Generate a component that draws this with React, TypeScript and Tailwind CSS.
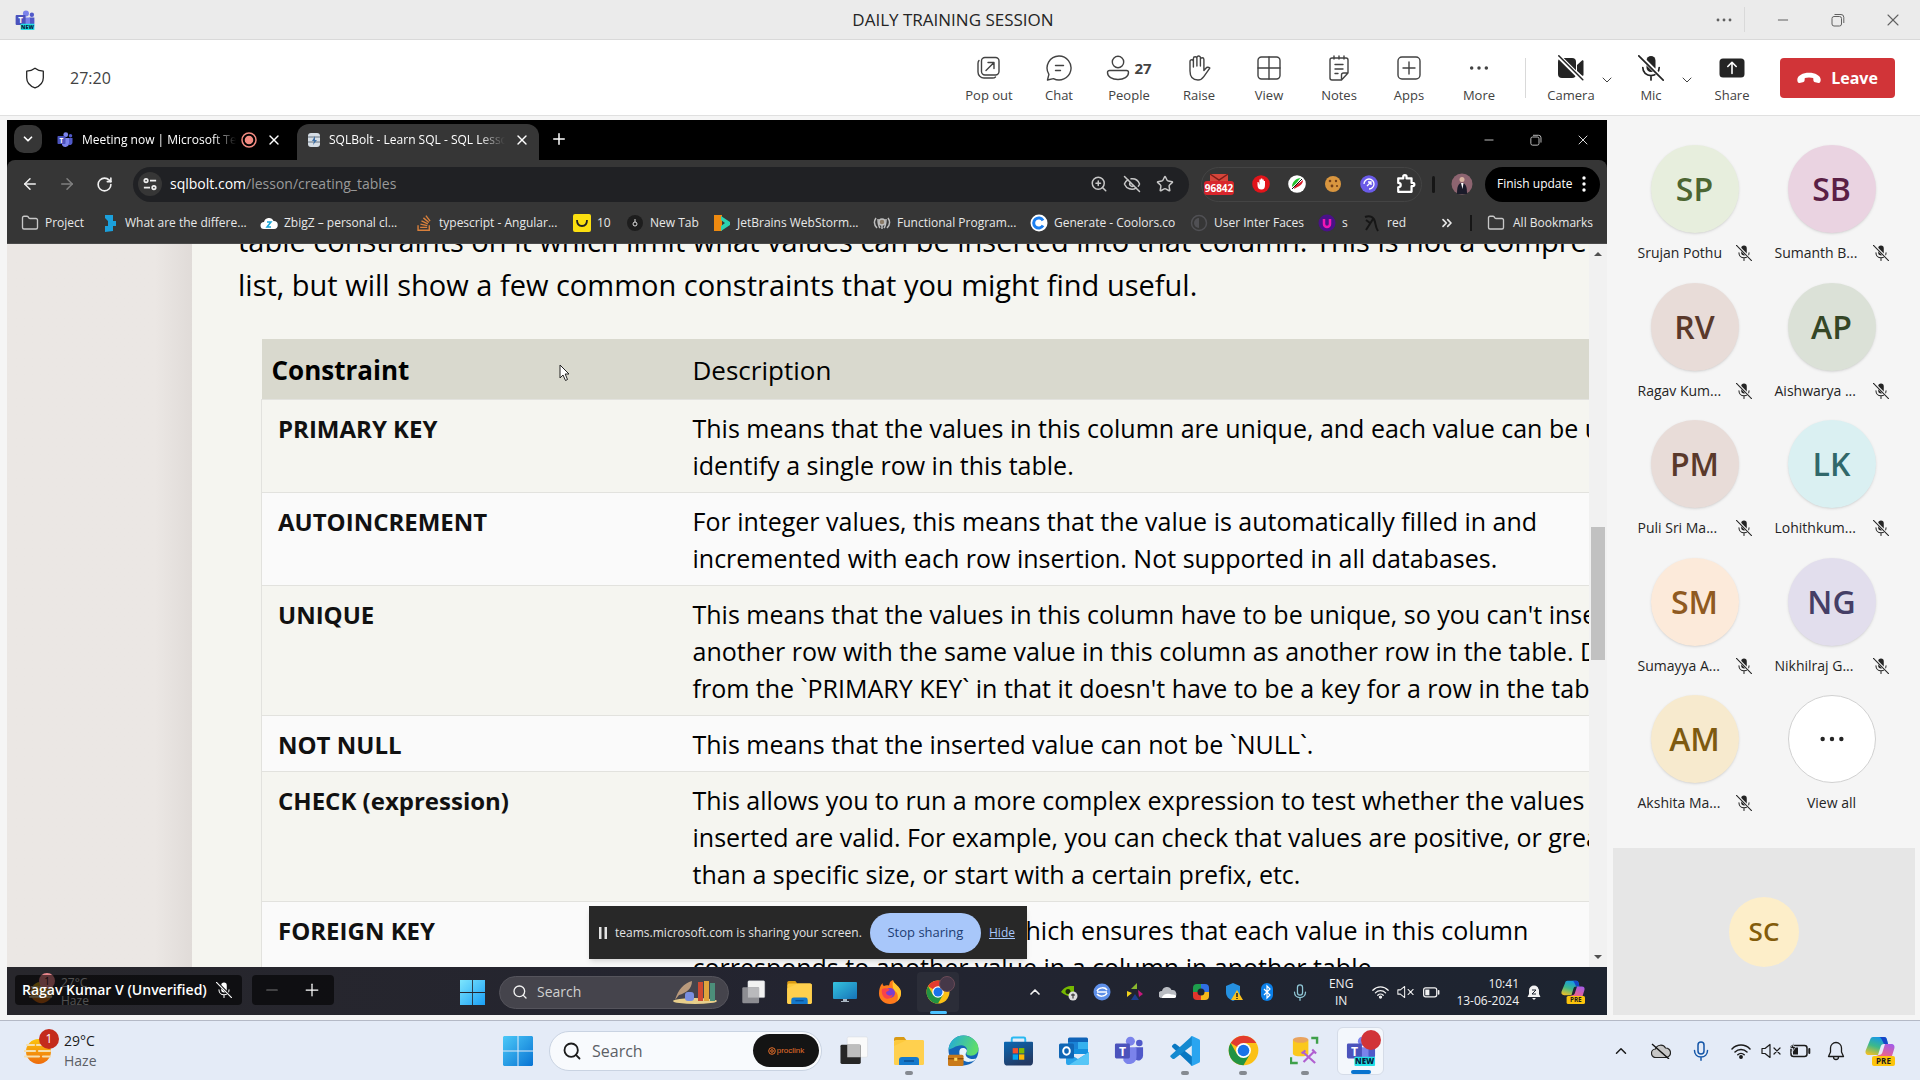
import React from "react";
import {
  ArrowLeft,
  ArrowRight,
  ChevronDown,
  ChevronUp,
  ChevronsRight,
  EyeOff,
  Folder,
  Minus,
  Plus,
  RotateCw,
  Search,
  Star,
  X,
  ZoomIn,
} from "lucide-react";
import { FaStackOverflow } from "react-icons/fa";

type IconProps = { className?: string };

/* ---------- line icons ---------- */

const Dots = ({ className = "" }: IconProps) => (
  <svg viewBox="0 0 24 24" className={className} fill="currentColor">
    <circle cx="4" cy="12" r="1.9" />
    <circle cx="12" cy="12" r="1.9" />
    <circle cx="20" cy="12" r="1.9" />
  </svg>
);

const Restore = ({ className = "" }: IconProps) => (
  <svg viewBox="0 0 14 14" className={className} fill="none" stroke="currentColor">
    <rect x="1" y="3.5" width="9.5" height="9.5" rx="2" />
    <path d="M3.5 1.5H10a2.8 2.8 0 0 1 2.8 2.8V10" />
  </svg>
);

const Shield = () => (
  <svg viewBox="0 0 20 22" className="h-[22px] w-5" fill="none" stroke="#242424" strokeWidth="1.3">
    <path d="M10 1.2C7.500 3.200 4.700 4 1.700 4.200v6.500c0 5 3.300 8.300 8.300 10.200 5-1.900 8.300-5.200 8.300-10.200V4.200C15.300 4 12.500 3.200 10 1.200z" strokeLinejoin="round" />
  </svg>
);

const line = {
  viewBox: "0 0 26 26",
  className: "h-[26px] w-[26px]",
  fill: "none",
  stroke: "currentColor",
  strokeWidth: 1.4,
  strokeLinecap: "round" as const,
  strokeLinejoin: "round" as const,
};

const PopOutIcon = () => (
  <svg {...line}>
    <rect x="5.500" y="2.500" width="17.500" height="17.500" rx="3.500" />
    <path d="M3 5.500c-.7.800-1 1.800-1 3V17a6 6 0 0 0 6 6h8.500c1.200 0 2.300-.4 3-1.100M10 15.500l8-8M12 7.500h6v6" />
  </svg>
);
const ChatIcon = () => (
  <svg {...line}>
    <path d="M13 1a12 12 0 1 1-5.600 22.600L1.500 25l1.400-5.700A12 12 0 0 1 13 1zM9.500 10.500h8M9.500 15.500h5" />
  </svg>
);
const PersonIcon = () => (
  <svg {...line} viewBox="0 0 24 26" className="h-[26px] w-6">
    <circle cx="12" cy="7" r="5.700" />
    <path d="M3.500 15.500h17a2 2 0 0 1 2 2c0 4.500-4.700 7-10.500 7s-10.500-2.500-10.500-7a2 2 0 0 1 2-2z" />
  </svg>
);
const HandIcon = () => (
  <svg {...line}>
    <path d="M4 14V6.500a1.700 1.700 0 0 1 3.400 0V12M7.400 11V3.500a1.700 1.700 0 0 1 3.500 0V11M10.900 11V2.700a1.700 1.700 0 0 1 3.500 0V11M14.400 11V4.500a1.700 1.700 0 0 1 3.500 0v11l2-2.300c1-1.200 2.600-1.300 3.600-.4l.3.300-6 8.600C16.400 23.800 14.600 25 12 25c-5.300 0-8-3.500-8-9v-3" />
  </svg>
);
const GridIcon = () => (
  <svg {...line}>
    <rect x="2" y="2" width="22" height="22" rx="3.500" />
    <path d="M13 2v22M2 13h22" />
  </svg>
);
const NotesIcon = () => (
  <svg {...line}>
    <path d="M6 3h14a2 2 0 0 1 2 2v13l-6.500 7H6a2 2 0 0 1-2-2V5a2 2 0 0 1 2-2zM22 18h-4.500a2 2 0 0 0-2 2v5M8 1v3M13 1v3M18 1v3M9 9.500h8M9 14h8M9 18.500h3" />
  </svg>
);
const AppsIcon = () => (
  <svg {...line}>
    <rect x="2" y="2" width="22" height="22" rx="4" />
    <path d="M13 7v12M7 13h12" />
  </svg>
);
const CameraOffIcon = () => (
  <svg viewBox="0 0 26 26" className="h-[26px] w-[26px]" fill="#242424">
    <rect x="0" y="3" width="18" height="20" rx="4" />
    <path d="M19 10l5-4.500c.6-.5 1.500 0 1.500.8v13.400c0 .8-.9 1.300-1.500.8L19 16z" />
    <path d="M.5 1l24 24" stroke="#fff" strokeWidth="4.500" />
    <path d="M.8.8l24 24" stroke="#242424" strokeWidth="1.500" strokeLinecap="round" />
  </svg>
);
const MicOff = ({ className = "", cut = "#fff", color = "#242424" }: IconProps & { cut?: string; color?: string }) => (
  <svg viewBox="0 0 26 26" className={className} fill="none" stroke={color} strokeWidth="1.700" strokeLinecap="round">
    <rect x="8.500" y="1" width="9" height="16" rx="4.500" fill={color} stroke="none" />
    <path d="M4.800 12.500c0 5 3.600 8.200 8.200 8.200s8.200-3.200 8.200-8.200M13 21v4" />
    <path d="M1.500.5l24 24" stroke={cut} strokeWidth="4" strokeLinecap="butt" />
    <path d="M.8.8l24.400 24.400" />
  </svg>
);
const ShareIcon = () => (
  <svg viewBox="0 0 26 26" className="h-[26px] w-[26px]">
    <rect x=".5" y="3.500" width="25" height="19" rx="3.500" fill="#242424" />
    <path d="M13 18.500v-11M8.800 11.500L13 7.300l4.200 4.200" fill="none" stroke="#fff" strokeWidth="1.600" strokeLinecap="round" strokeLinejoin="round" />
  </svg>
);
const HangUp = () => (
  <svg viewBox="0 0 24 12" className="h-3 w-6" fill="#fff">
    <path d="M12 .8C6 .8.300 3.500.300 7.800c0 2 .7 3.300 2.200 3.100l3.300-.6c1.200-.2 1.700-.9 1.800-2l.2-2.200c2.700-.9 5.700-.9 8.400 0l.2 2.200c.1 1.100.6 1.800 1.800 2l3.300.6c1.500.2 2.200-1.100 2.200-3.100C23.700 3.500 18 .8 12 .8z" />
  </svg>
);

/* ---------- product icons ---------- */

const TeamsLogo = ({ className = "", fresh = false }: IconProps & { fresh?: boolean }) => (
  <svg viewBox="0 0 32 32" className={className}>
    <circle cx="27" cy="7.500" r="3.500" fill="#5059c9" />
    <circle cx="17.500" cy="5.500" r="4.800" fill="#7b83eb" />
    <path d="M23 12h8v9a5 5 0 0 1-8 4z" fill="#5059c9" />
    <path d="M10 12h14v10a7.500 7.500 0 0 1-14 4z" fill="#7b83eb" />
    <rect x="1" y="8" width="16" height="16" rx="1.500" fill="#4b53bc" />
    <text x="9" y="21" fontSize="13" fontWeight="700" fill="#fff" textAnchor="middle" fontFamily="Open Sans">T</text>
    {fresh && (
      <>
        <rect x="9" y="22" width="22" height="10" rx="1" fill="#22e0e6" />
        <text x="20" y="30" fontSize="8.500" fontWeight="800" fill="#06233f" textAnchor="middle" fontFamily="Open Sans">NEW</text>
      </>
    )}
  </svg>
);

const WinLogo = ({ className = "" }: IconProps) => (
  <svg viewBox="0 0 30 30" className={className}>
    <defs>
      <linearGradient id="win" x1="0" y1="0" x2="1" y2="1">
        <stop offset="0" stopColor="#4cc9f8" />
        <stop offset="1" stopColor="#0873d3" />
      </linearGradient>
    </defs>
    <path d="M1 0h13.500v14.500H0V1zM15.500 0H29l1 1v13.500H15.500zM0 15.500h14.500V30H1l-1-1zM15.500 15.500H30V29l-1 1H15.500z" fill="url(#win)" />
  </svg>
);

const WinLogoLight = ({ className = "" }: IconProps) => (
  <svg viewBox="0 0 30 30" className={className}>
    <defs>
      <linearGradient id="winl" x1="0" y1="0" x2="1" y2="1">
        <stop offset="0" stopColor="#7de5fc" />
        <stop offset="1" stopColor="#1a9ff5" />
      </linearGradient>
    </defs>
    <path d="M0 0h14.500v14.500H0zM15.500 0H30v14.500H15.500zM0 15.500h14.500V30H0zM15.500 15.500H30V30H15.500z" fill="url(#winl)" />
  </svg>
);

const TaskView = ({ className = "", dark = false }: IconProps & { dark?: boolean }) => (
  <svg viewBox="0 0 30 30" className={className}>
    <rect x="8" y="1" width="21" height="21" rx="1.500" fill={dark ? "#f2f2f2" : "#fafafa"} stroke="#d5d8dd" strokeWidth=".5" />
    <rect x="1" y="9" width="21" height="20" rx="1.500" fill={dark ? "#8d8d92" : "#262626"} />
    <path d="M8 9h14v13H8z" fill={dark ? "#b9b9bc" : "#bdbdbd"} />
  </svg>
);

const Explorer = ({ className = "" }: IconProps) => (
  <svg viewBox="0 0 30 28" className={className}>
    <path d="M0 2a2 2 0 0 1 2-2h8l3 4h-13z" fill="#d99a14" />
    <rect x="0" y="3" width="30" height="25" rx="2" fill="#fdc93c" />
    <path d="M0 9L13 3h15a2 2 0 0 1 2 2v21a2 2 0 0 1-2 2H2a2 2 0 0 1-2-2z" fill="#ffd04e" />
    <path d="M5 28v-5a3 3 0 0 1 3-3h14a3 3 0 0 1 3 3v5z" fill="#1479cc" />
    <path d="M10 24h10" stroke="#0a4f92" strokeWidth="1.500" />
  </svg>
);

const EdgeLogo = ({ className = "" }: IconProps) => (
  <svg viewBox="0 0 30 30" className={className}>
    <defs>
      <linearGradient id="edg" x1="0" y1="0" x2="1" y2=".3">
        <stop offset="0" stopColor="#1fa8e0" />
        <stop offset="1" stopColor="#5ddc6c" />
      </linearGradient>
    </defs>
    <circle cx="15" cy="15" r="14.500" fill="#1464b8" />
    <path d="M.5 14C1.500 5 8 .5 15 .5S29.500 6 29.500 13c0 4-3 7-7.500 7-3 0-5-1.300-4-3 1.500-3-.5-7-5-7-6 0-11 5-12.500 4z" fill="url(#edg)" />
    <path d="M11 16c-.5 6 4 10.500 10 10 3-.3 5-1.300 7-3.200-3 .7-8 .8-10-1.800-1.500-2-1-3 0-4.500 1-2-1-4-3.500-4S11.200 14 11 16z" fill="#e8f3fb" />
    <rect x="0" y="19" width="15" height="11" rx="1.500" fill="#c97a1a" />
    <path d="M0 23h15" stroke="#7a4208" />
    <rect x="6" y="22" width="3" height="3" fill="#ffd75e" />
  </svg>
);

const StoreLogo = ({ className = "" }: IconProps) => (
  <svg viewBox="0 0 30 30" className={className}>
    <defs>
      <linearGradient id="sto" x1="0" y1="0" x2=".5" y2="1">
        <stop offset="0" stopColor="#0a68b4" />
        <stop offset="1" stopColor="#233a64" />
      </linearGradient>
    </defs>
    <path d="M8 6V2.500A1.500 1.500 0 0 1 9.500 1h11A1.500 1.500 0 0 1 22 2.500V6" fill="none" stroke="#29b9f2" strokeWidth="2" />
    <path d="M0 6.500a1 1 0 0 1 1-1h28a1 1 0 0 1 1 1V26a4 4 0 0 1-4 4H4a4 4 0 0 1-4-4z" fill="url(#sto)" />
    <path d="M9 12h5.500v5.500H9z" fill="#f1502f" />
    <path d="M15.500 12H21v5.500h-5.500z" fill="#80bb03" />
    <path d="M9 18.500h5.500V24H9z" fill="#03a5f0" />
    <path d="M15.500 18.500H21V24h-5.500z" fill="#ffb903" />
  </svg>
);

const OutlookLogo = ({ className = "" }: IconProps) => (
  <svg viewBox="0 0 30 28" className={className}>
    <path d="M9 2a1.500 1.500 0 0 1 1.500-1.500h17A1.500 1.500 0 0 1 29 2v13H9z" fill="#0f63b8" />
    <path d="M9 5h10v7H9z" fill="#1a84d6" />
    <path d="M19 5h10v7H19z" fill="#35b1ee" />
    <path d="M9 12h20v5H9z" fill="#1490df" />
    <path d="M7 15l12 7 11-7v11a2 2 0 0 1-2 2H9a2 2 0 0 1-2-2z" fill="#2aa4ea" />
    <path d="M30 15v11a2 2 0 0 1-2 2H10z" fill="#56c6f7" />
    <rect x="0" y="6.500" width="15" height="15" rx="1.500" fill="#1066b5" />
    <ellipse cx="7.500" cy="14" rx="3.300" ry="3.800" fill="none" stroke="#fff" strokeWidth="2" />
  </svg>
);

const CodeLogo = ({ className = "" }: IconProps) => (
  <svg viewBox="0 0 30 30" className={className}>
    <path d="M22 0v30L2.500 11.500c-.8-.8-.8-1.500 0-2.200l1.300-1.200c.6-.5 1.300-.5 2 0L22 20.500z" fill="#0a78c2" />
    <path d="M22 0L.800 19.300c-.7.700-.7 1.400 0 2l1.700 1.400c.6.500 1.300.5 2 0L22 9.500z" fill="#1489d0" />
    <path d="M22 0l7 3.300c.7.300 1 .8 1 1.500v20.400c0 .7-.3 1.200-1 1.500L22 30c-.8.300-1.500 0-2-.6.900.6 1.800.2 1.800-.9V1.500c0-1.100-.9-1.500-1.800-.9.500-.6 1.200-.9 2-.6z" fill="#2aa5f0" />
  </svg>
);

const ChromeLogo = ({ className = "" }: IconProps) => (
  <svg viewBox="0 0 48 48" className={className}>
    <circle cx="24" cy="24" r="23" fill="#fbc116" />
    <path d="M24 24L4.100 12.500A23 23 0 0 1 43.900 12.500H24z" fill="#e33b2e" />
    <path d="M4.100 12.500A23 23 0 0 0 24 47l10-17.300-10 4-10-4z" fill="#229342" />
    <circle cx="24" cy="24" r="11.500" fill="#fff" />
    <circle cx="24" cy="24" r="9" fill="#1a73e8" />
  </svg>
);

const DatabaseTool = ({ className = "" }: IconProps) => (
  <svg viewBox="0 0 30 30" className={className}>
    <path d="M3 4v14c0 2 3.500 3 8 3s8-1 8-3V4z" fill="#fbc81d" />
    <ellipse cx="11" cy="4" rx="8" ry="3" fill="#e9a35e" />
    <path d="M22 2h6v6M1 22v6h7" fill="none" stroke="#3fa04a" strokeWidth="2.500" />
    <path d="M14 27L25 16M14 17l12 11M12 18l4-3M23 14l4 4" stroke="#b05fd0" strokeWidth="2.200" />
  </svg>
);

const Copilot = ({ className = "" }: IconProps) => (
  <svg viewBox="0 0 30 30" className={className}>
    <defs>
      <linearGradient id="cpa" x1=".6" y1="0" x2=".2" y2="1">
        <stop offset="0" stopColor="#1697e8" />
        <stop offset=".5" stopColor="#3cb98a" />
        <stop offset="1" stopColor="#f2c025" />
      </linearGradient>
      <linearGradient id="cpb" x1=".8" y1="0" x2=".2" y2="1">
        <stop offset="0" stopColor="#a45be8" />
        <stop offset="1" stopColor="#f5657f" />
      </linearGradient>
    </defs>
    <path d="M8 1h11c2 0 2.500 1 3 3l1 4h-4c-2 0-3 1-3.500 3L13 19H4c-3 0-4-2-3.300-4.500L5 4c.6-2 1.500-3 3-3z" fill="url(#cpa)" />
    <path d="M14 1h5c2 0 2.500 1 3 3l1 4h-4l-2-4c-.6-1.500-1.500-3-3-3z" fill="#1546c8" />
    <path d="M20 8h6c3 0 4 2 3.300 4.500L27 20H11l3-1c2 0 3-1 3.500-3z" fill="url(#cpb)" />
    <rect x="7" y="20" width="23" height="10" rx="2" fill="#fcc40c" />
    <text x="18.500" y="28" fontSize="8" fontWeight="700" textAnchor="middle" fill="#1b1b1b" fontFamily="Open Sans">PRE</text>
  </svg>
);

const FirefoxLogo = ({ className = "" }: IconProps) => (
  <svg viewBox="0 0 24 24" className={className}>
    <path d="M12 2c1-1 2-1.700 3-2 0 2 2 3.500 4 5.500S23.500 10 23 14c-.7 5.500-5 10-11 10S1 19.500 1 13.500C1 9 2 6 4.500 3c0 1.500.5 2.500 1.500 3 1.500-.8 3-1 5-.5z" fill="#ff7a1c" />
    <path d="M15 0c0 2 2 3.500 4 5.500S23.500 10 23 14c-.4 3-2 6-4 7.500 1.500-4 1-8-1.500-10S14 6 15 0z" fill="#ffc62e" />
    <circle cx="12" cy="13" r="5" fill="#7a3fd0" />
    <path d="M4 9c2-1 5-1 7 0 1 .5 0 2-2 2.500-1.500.4-1 2 0 3 1.500 1.500 4 1.500 6 0-1 3-4 5-7 4S3 13 4 9z" fill="#f8434b" />
  </svg>
);

const Haze = ({ className = "" }: IconProps) => (
  <svg viewBox="0 0 28 28" className={className}>
    <defs>
      <linearGradient id="hz" x1="0" y1="0" x2="0" y2="1">
        <stop offset="0" stopColor="#fbc50e" />
        <stop offset="1" stopColor="#ee6a0c" />
      </linearGradient>
    </defs>
    <ellipse cx="14.500" cy="14.500" rx="12.500" ry="12.500" fill="url(#hz)" />
    <path d="M3 8h7M13 8h8M0 14h11M15 14h11M1 19.500h14M19 19.500h7" stroke="#f5dfae" strokeWidth="2.200" strokeLinecap="round" />
  </svg>
);

const Wifi = ({ className = "" }: IconProps) => (
  <svg viewBox="0 0 20 16" className={className} fill="none" stroke="currentColor" strokeWidth="1.500" strokeLinecap="round">
    <path d="M1 6c5-5.200 13-5.200 18 0M4 9c3.400-3.400 8.600-3.400 12 0M6.800 11.800c1.900-1.900 4.500-1.900 6.400 0" />
    <circle cx="10" cy="14" r="1.200" fill="currentColor" />
  </svg>
);
const Mute = ({ className = "" }: IconProps) => (
  <svg viewBox="0 0 20 16" className={className} fill="none" stroke="currentColor" strokeWidth="1.200" strokeLinejoin="round" strokeLinecap="round">
    <path d="M1 5.500h3L9 1.500v13l-5-4H1zM13 5l6 6M19 5l-6 6" />
  </svg>
);
const Battery = ({ className = "", charging = false }: IconProps & { charging?: boolean }) => (
  <svg viewBox="0 0 22 16" className={className} fill="none" stroke="currentColor" strokeWidth="1.500">
    <rect x="2" y="3" width="16" height="11" rx="2.500" />
    <path d="M20.300 6.500v4" strokeLinecap="round" strokeWidth="2" />
    <rect x="4" y="5" width="5" height="7" fill="currentColor" stroke="none" />
    {charging && <path d="M5 0L1 6h3l-1 4 4-6H4.500z" fill="currentColor" stroke="#e4ebf7" strokeWidth=".7" />}
  </svg>
);
const MicLine = ({ className = "" }: IconProps) => (
  <svg viewBox="0 0 16 20" className={className} fill="none" stroke="currentColor" strokeWidth="1.500" strokeLinecap="round">
    <rect x="5" y="1" width="6" height="12" rx="3" />
    <path d="M1.500 9.500c0 4 2.800 6.500 6.500 6.500s6.500-2.500 6.500-6.500M8 16v3.200" />
  </svg>
);
const Bell = () => (
  <svg viewBox="0 0 18 20" className="h-5 w-[18px]" fill="none" stroke="#1b1b1b" strokeWidth="1.300" strokeLinejoin="round">
    <path d="M9 1.500a5.500 5.500 0 0 0-5.500 5.500v4L1.500 15.500h15L14.500 11V7A5.500 5.500 0 0 0 9 1.500zM6.500 16a2.500 2.500 0 0 0 5 0" />
  </svg>
);

/* ---------- data ---------- */

const people = [
  ["SP", "Srujan Pothu", "bg-[#e7eedd] text-[#4c6532]"],
  ["SB", "Sumanth B...", "bg-[#ead3e1] text-[#5b1f45]"],
  ["RV", "Ragav Kum...", "bg-[#e8dcd8] text-[#5a392b]"],
  ["AP", "Aishwarya ...", "bg-[#dbe1d7] text-[#354626]"],
  ["PM", "Puli Sri Ma...", "bg-[#e8dcd8] text-[#5a392b]"],
  ["LK", "Lohithkum...", "bg-[#daf0f2] text-[#31686a]"],
  ["SM", "Sumayya A...", "bg-[#fceada] text-[#8f5a21]"],
  ["NG", "Nikhilraj G...", "bg-[#e2deed] text-[#453e66]"],
  ["AM", "Akshita Ma...", "bg-[#f7eace] text-[#7e5a10]"],
];

const rows: [string, string[]][] = [
  ["PRIMARY KEY", ["This means that the values in this column are unique, and each value can be used to", "identify a single row in this table."]],
  ["AUTOINCREMENT", ["For integer values, this means that the value is automatically filled in and", "incremented with each row insertion. Not supported in all databases."]],
  ["UNIQUE", ["This means that the values in this column have to be unique, so you can't insert", "another row with the same value in this column as another row in the table. Differs", "from the `PRIMARY KEY` in that it doesn't have to be a key for a row in the table."]],
  ["NOT NULL", ["This means that the inserted value can not be `NULL`."]],
  ["CHECK (expression)", ["This allows you to run a more complex expression to test whether the values", "inserted are valid. For example, you can check that values are positive, or greater", "than a specific size, or start with a certain prefix, etc."]],
  ["FOREIGN KEY", ["This is a consistency check which ensures that each value in this column", "corresponds to another value in a column in another table."]],
];

const bookmarks: [string, string, React.ReactNode][] = [
  ["Project", "w-20", <Folder className="h-[18px] w-[18px] text-[#c7c7c7]" strokeWidth={1.8} />],
  ["What are the differe...", "w-[159px]", <svg viewBox="0 0 16 18" className="h-[18px] w-4"><path d="M3 1h8v6H6L3 4zM6 7h8v5H6zM3 12h8v5l-8 1z" fill="#1ba0dc" /></svg>],
  ["ZbigZ – personal cl...", "w-[155px]", <svg viewBox="0 0 18 14" className="h-3.5 w-[18px]"><path d="M4 13a3.500 3.500 0 0 1 0-7 5 5 0 0 1 9.500-1A4 4 0 0 1 14 13z" fill="#fff" /><path d="M7 6h4l-4 5h4" fill="none" stroke="#18a5d6" strokeWidth="1.500" /></svg>],
  ["typescript - Angular...", "w-[158px]", <FaStackOverflow className="h-[18px] w-4 text-[#d9803c]" />],
  ["10", "w-[53px]", <svg viewBox="0 0 18 18" className="h-[18px] w-[18px]"><rect width="18" height="18" rx="2" fill="#fbdf10" /><path d="M4 6c0 4 2 6 5 6s5-2 5-6" fill="none" stroke="#222" strokeWidth="1.800" /></svg>],
  ["New Tab", "w-[87px]", <svg viewBox="0 0 18 18" className="h-[18px] w-[18px]"><circle cx="9" cy="9" r="8" fill="#1d1d1d" /><circle cx="9" cy="10" r="2" fill="none" stroke="#ddd" /><path d="M9 8V5" stroke="#ddd" /></svg>],
  ["JetBrains WebStorm...", "w-40", <svg viewBox="0 0 18 18" className="h-[18px] w-[18px]"><path d="M1 1h8v16H1z" fill="#ee8a10" /><path d="M8 2l9 6v3l-9 6v-5l4-3-4-3z" fill="#2bd3b0" /></svg>],
  ["Functional Program...", "w-[157px]", <svg viewBox="0 0 18 18" className="h-[18px] w-[18px]" fill="none" stroke="#bdbdbd" strokeWidth="1.500"><path d="M3 4c-2 3-2 7 1 10M15 4c2 3 2 7-1 10M5 5c0 3 0 6 2 9M13 5c0 3 0 6-2 9" /><circle cx="9" cy="8" r="3" fill="#8a7a66" /><path d="M9 11v4" /></svg>],
  ["Generate - Coolors.co", "w-40", <svg viewBox="0 0 18 18" className="h-[18px] w-[18px]"><circle cx="9" cy="9" r="8.500" fill="#fff" /><path d="M13 6.500a5 5 0 1 0 0 5" fill="none" stroke="#1b7ff0" strokeWidth="3" /></svg>],
  ["User Inter Faces", "w-32", <svg viewBox="0 0 18 18" className="h-[18px] w-[18px]"><circle cx="9" cy="9" r="7.500" fill="none" stroke="#505054" strokeWidth="1.500" /><path d="M9 4v10a5 5 0 0 1 0-10z" fill="#505054" /></svg>],
  ["s", "w-[45px]", <svg viewBox="0 0 18 18" className="h-[18px] w-[18px]"><circle cx="9" cy="9" r="8.500" fill="#4a1189" /><path d="M6 5v5a3 3 0 0 0 6 0V5" fill="none" stroke="#f016b5" strokeWidth="2.500" /></svg>],
  ["red", "w-16", <svg viewBox="0 0 18 18" className="h-[18px] w-[18px]" fill="none" stroke="#161616" strokeWidth="2"><path d="M2 3c5-2 9 0 10 5s1 6 3 9M10 5L3 16M3 6l4 3" /></svg>],
];

/* ---------- meeting window ---------- */

const TitleBar = () => (
  <header className="relative flex h-10 shrink-0 items-center justify-between border-b border-[#d9d9d9] bg-[#ebebeb] pl-[15px] text-[#616161]">
    <TeamsLogo fresh className="h-5 w-5" />
    <h1 className="absolute inset-x-0 pr-[14px] text-center text-[17px] leading-5 text-[#242424]">DAILY TRAINING SESSION</h1>
    <div className="relative flex items-center">
      <button aria-label="Settings" className="flex w-10 justify-center"><Dots className="h-[18px] w-[18px]" /></button>
      <span className="h-[25px] w-px bg-[#d9d9d9]" />
      <button aria-label="Minimize" className="ml-2.5 flex w-[55px] justify-center"><Minus className="h-4 w-4" strokeWidth={1.5} /></button>
      <button aria-label="Restore" className="flex w-[55px] justify-center"><Restore className="h-3.5 w-3.5" /></button>
      <button aria-label="Close" className="flex w-[55px] justify-center"><X className="h-5 w-5" strokeWidth={1.3} /></button>
    </div>
  </header>
);

const Tool = ({ label, width, children }: { label: string; width: string; children: React.ReactNode }) => (
  <button className={`flex flex-col items-center gap-1 pt-1 text-[13px] leading-5 ${width}`}>
    <span className="flex h-[26px] items-center gap-1">{children}</span>
    {label}
  </button>
);

const MeetingBar = () => (
  <div className="flex h-[76px] shrink-0 items-center border-b border-[#e0e0e0] bg-white pr-[25px] pl-[25px] text-[#424242]">
    <Shield />
    <span className="ml-[25px] text-base">27:20</span>
    <div className="ml-auto flex">
      <Tool label="Pop out" width="w-[70px]"><PopOutIcon /></Tool>
      <Tool label="Chat" width="w-[70px]"><ChatIcon /></Tool>
      <Tool label="People" width="w-[70px]"><PersonIcon /><b className="text-[15px]">27</b></Tool>
      <Tool label="Raise" width="w-[70px]"><HandIcon /></Tool>
      <Tool label="View" width="w-[70px]"><GridIcon /></Tool>
      <Tool label="Notes" width="w-[70px]"><NotesIcon /></Tool>
      <Tool label="Apps" width="w-[70px]"><AppsIcon /></Tool>
      <Tool label="More" width="w-[70px]"><Dots className="h-[22px] w-[22px]" /></Tool>
    </div>
    <span className="mr-[17px] ml-[11px] h-10 w-px bg-[#d9d9d9]" />
    <Tool label="Camera" width="w-14"><CameraOffIcon /></Tool>
    <button aria-label="Camera options" className="mr-2 pt-1"><ChevronDown className="h-4 w-4" strokeWidth={1.5} /></button>
    <Tool label="Mic" width="w-14"><MicOff className="h-[26px] w-[26px]" /></Tool>
    <button aria-label="Mic options" className="mr-[9px] pt-1"><ChevronDown className="h-4 w-4" strokeWidth={1.5} /></button>
    <Tool label="Share" width="w-14"><ShareIcon /></Tool>
    <button className="ml-5 flex h-10 w-[115px] items-center justify-center gap-2.5 rounded bg-[#d13438] text-base font-bold text-white">
      <HangUp />
      Leave
    </button>
  </div>
);

/* ---------- shared browser ---------- */

const TabStrip = () => (
  <div className="flex h-10 shrink-0 items-end bg-black text-xs text-white">
    <button aria-label="Search tabs" className="mb-[7px] ml-[7px] flex h-7 w-7 items-center justify-center rounded-[10px] bg-[#363636]"><ChevronDown className="h-3.5 w-3.5" strokeWidth={3} /></button>
    <div className="ml-[15px] flex h-9 w-[228px] items-center pb-1">
      <TeamsLogo className="h-4 w-4 shrink-0" />
      <span className="ml-[9px] w-[154px] overflow-hidden mask-r-from-85% whitespace-nowrap">Meeting now | Microsoft Teams</span>
      <svg viewBox="0 0 16 16" className="ml-[5px] h-4 w-4 shrink-0" fill="none" stroke="#f28b82" strokeWidth="1.500"><circle cx="8" cy="8" r="7" /><circle cx="8" cy="8" r="3.500" fill="#f28b82" /></svg>
      <button aria-label="Close tab" className="ml-[9px]"><X className="h-4 w-4" /></button>
    </div>
    <div className="ml-3 flex h-9 w-[242px] items-center rounded-t-xl bg-[#363636] pb-1 pl-2.5">
      <svg viewBox="0 0 14 16" className="h-4 w-3.5 shrink-0"><rect x="1" y="1" width="12" height="14" rx="3" fill="#d5dde5" /><path d="M1 5h12M1 10h12" stroke="#66727f" /><path d="M8 4L5 9h2l-1 4 4-5H8z" fill="#3d6fa5" /></svg>
      <span className="ml-2 w-[176px] overflow-hidden mask-r-from-85% whitespace-nowrap">SQLBolt - Learn SQL - SQL Lesson 16</span>
      <button aria-label="Close tab" className="ml-[9px]"><X className="h-4 w-4" /></button>
    </div>
    <button aria-label="New tab" className="mb-3 ml-[11px]"><Plus className="h-[18px] w-[18px]" /></button>
    <div className="ml-auto flex h-9 items-center pr-px pb-1 text-[#d8d8d8]">
      <button aria-label="Minimize" className="flex w-[47px] justify-center"><Minus className="h-3.5 w-3.5" strokeWidth={1.5} /></button>
      <button aria-label="Restore" className="flex w-[47px] justify-center"><Restore className="h-3 w-3" /></button>
      <button aria-label="Close" className="flex w-[47px] justify-center"><X className="h-4 w-4" strokeWidth={1.5} /></button>
    </div>
  </div>
);

const AddressBar = () => (
  <div className="bg-black">
    <div className="flex h-12 shrink-0 items-center rounded-t-lg bg-[#363636] pr-[7px] pl-3.5 text-[#f0f0f0]">
      <button aria-label="Back"><ArrowLeft className="h-[18px] w-[18px]" /></button>
      <button aria-label="Forward" className="ml-[19px] text-[#808080]"><ArrowRight className="h-[18px] w-[18px]" /></button>
      <button aria-label="Reload" className="ml-5"><RotateCw className="h-[17px] w-[17px]" strokeWidth={2.3} /></button>
      <div className="ml-5 flex h-[35px] flex-1 items-center gap-[15px] rounded-full bg-[#202124] pr-[15px] pl-[5px] text-[#c7c7c7]">
        <span className="flex h-6 w-6 items-center justify-center rounded-full bg-[#363636]">
          <svg viewBox="0 0 16 16" className="h-3.5 w-3.5" fill="none" stroke="#eee" strokeWidth="2"><circle cx="3.500" cy="4" r="2" /><path d="M8 4h7M1 12h7" /><circle cx="12.500" cy="12" r="2" /></svg>
        </span>
        <a href="#url" className="-ml-[7px] flex-1 text-sm text-[#9a9a9a]"><span className="text-white">sqlbolt.com</span>/lesson/creating_tables</a>
        <ZoomIn className="h-[18px] w-[18px]" />
        <EyeOff className="h-[18px] w-[18px]" />
        <Star className="h-[18px] w-[18px]" />
      </div>
      <div className="ml-3 flex h-[35px] w-[221px] items-center justify-between rounded-full border border-[#444] px-0.5">
        <svg viewBox="0 0 30 26" className="h-[26px] w-[30px]"><path d="M6 3h18v8H6z" fill="#d6453a" /><path d="M6 3l9 6 9-6" fill="none" stroke="#7d1d18" strokeWidth="1.500" /><rect y="10" width="30" height="14" rx="3" fill="#d8262c" /><text x="15" y="21" fontSize="10" fontWeight="700" fill="#fff" textAnchor="middle" fontFamily="Open Sans">96842</text></svg>
        <svg viewBox="0 0 18 18" className="h-[18px] w-[18px]"><circle cx="9" cy="9" r="8.800" fill="#e1141a" /><path d="M5.500 7v3c0 3 1.500 4.500 4 4.500S13 13 13 10V6h-1.200v3V4.500h-1.500V9 3.500H8.800V9 4.500H7.400V10L6.500 7z" fill="#fff" /></svg>
        <svg viewBox="0 0 18 18" className="h-[18px] w-[18px]"><circle cx="9" cy="9" r="8.800" fill="#fff" /><path d="M4 12c0-5 4-9 9-9-3 2-4 6-9 9z" fill="#22c32e" /><path d="M6 14c1-5 5-5 9-9 0 5-4 6-9 9z" fill="#d81c2a" /><path d="M4 14L14 4" stroke="#111" /></svg>
        <svg viewBox="0 0 18 18" className="h-[18px] w-[18px]"><circle cx="9" cy="9" r="8" fill="#d9963f" /><g fill="#73401a"><circle cx="6" cy="6" r="1.300" /><circle cx="12" cy="6" r="1.200" /><circle cx="8" cy="11" r="1.400" /><circle cx="13" cy="11" r="1.100" /></g></svg>
        <svg viewBox="0 0 18 18" className="h-[18px] w-[18px]"><circle cx="9" cy="9" r="8.800" fill="#6a5be8" /><path d="M4 9a5 5 0 1 1 5 5M7 11l4-4M8 7h3v3" fill="none" stroke="#fff" strokeWidth="1.300" /></svg>
        <svg viewBox="0 0 18 18" className="mr-[3px] h-5 w-5" fill="none" stroke="#fff" strokeWidth="2"><path d="M2 4h4.500V2.500a1.500 1.500 0 0 1 3 0V4H14v4h1a1.500 1.500 0 0 1 0 3h-1v5H2v-4c3 0 3-4 0-4z" strokeLinejoin="round" /></svg>
      </div>
      <span className="ml-2.5 h-[17px] w-[3px] rounded bg-[#161616]" />
      <svg viewBox="0 0 22 22" className="ml-4 h-[22px] w-[22px]"><circle cx="11" cy="11" r="10.500" fill="#8d6470" /><circle cx="11" cy="6.500" r="2.500" fill="#d8b4a0" /><path d="M6 21c0-7 1-11 5-11s5 4 5 11z" fill="#1b1b2a" /><path d="M10 10h2.500l-1 6z" fill="#fff" /></svg>
      <button className="ml-3 flex h-[35px] w-[115px] shrink-0 items-center justify-between rounded-full bg-black pr-3.5 pl-3 text-xs whitespace-nowrap text-white">
        Finish update
        <svg viewBox="0 0 4 16" className="h-4 w-1" fill="#fff"><circle cx="2" cy="2" r="1.700" /><circle cx="2" cy="8" r="1.700" /><circle cx="2" cy="14" r="1.700" /></svg>
      </button>
    </div>
  </div>
);

const BookmarkBar = () => (
  <nav className="flex h-9 shrink-0 items-center border-b border-[#4a4a4a] bg-[#363636] pr-3.5 pb-1.5 pl-3.5 text-xs text-[#e8e8e8]">
    {bookmarks.map(([label, width, icon]) => (
      <a key={label} href="#bookmark" className={`flex shrink-0 items-center gap-1.5 whitespace-nowrap ${width}`}>
        <span className="flex w-[18px] shrink-0 justify-center">{icon}</span>
        {label}
      </a>
    ))}
    <ChevronsRight className="ml-auto h-4 w-4" strokeWidth={2.5} />
    <span className="mx-[15px] h-4 w-0.5 bg-[#161616]" />
    <a href="#all" className="flex items-center gap-2"><Folder className="h-[18px] w-[18px] text-[#c7c7c7]" strokeWidth={1.8} />All Bookmarks</a>
  </nav>
);

const Lesson = () => (
  <div className="relative flex min-h-0 flex-1 overflow-hidden bg-[#f5f5f0]">
    <div className="w-[185px] shrink-0 bg-linear-to-r from-[#ebe7e4] from-80% to-[#e0dbd8]" />
    <main className="min-w-0 flex-1 overflow-hidden pl-[46px] whitespace-nowrap text-black">
      <p className="-mt-[25px] text-[29px] leading-11">
        table constraints on it which limit what values can be inserted into that column. This is not a comprehensive
        <br />
        list, but will show a few common constraints that you might find useful.
      </p>
      <table className="mt-8 ml-[23px] w-[1400px] table-fixed border-collapse text-left">
        <thead>
          <tr className="h-[60px] bg-[#d9d9ce] text-[26px]">
            <th className="w-[431px] pt-1 pl-2.5 font-bold">Constraint</th>
            <th className="pt-1 font-normal">Description</th>
          </tr>
        </thead>
        <tbody className="text-2xl leading-[37px]">
          {rows.map(([name, text]) => (
            <tr key={name} className="border border-[#e2e2de] even:bg-[#fafafa]">
              <th className="pt-2.5 pb-2 pl-4 align-top font-bold text-[#111]">{name}</th>
              <td className="pt-2.5 pb-2 align-top text-[25px]">
                {text.map((part) => (
                  <div key={part}>{part}</div>
                ))}
              </td>
            </tr>
          ))}
        </tbody>
      </table>
    </main>
    <div className="flex w-[18px] shrink-0 flex-col items-center justify-between bg-[#f1f1f1] py-2">
      <span className="border-x-4 border-b-4 border-transparent border-b-[#505050]" />
      <span className="mb-6 h-[133px] w-3.5 bg-[#c1c1c1]" />
      <span className="border-x-4 border-t-4 border-transparent border-t-[#505050]" />
    </div>
    <svg viewBox="0 0 12 18" className="absolute top-[120px] left-[552px] h-[18px] w-3"><path d="M1 1v13l3-3 2.500 5.500 2-1L6.200 10H10z" fill="#fff" stroke="#222" /></svg>
    <div className="absolute bottom-2 left-[582px] flex h-[53px] w-[438px] items-center justify-between bg-[#282828] pr-3 pl-2.5 text-xs whitespace-nowrap text-[#e3e3e3] shadow-md">
      <svg viewBox="0 0 8 12" className="h-3 w-2" fill="#e3e3e3"><path d="M0 0h2.500v12H0zM5.500 0H8v12H5.500z" /></svg>
      teams.microsoft.com is sharing your screen.
      <button className="h-10 w-[111px] rounded-full bg-[#a8c7fa] text-[13px] font-medium text-[#1d3d73]">Stop sharing</button>
      <a href="#hide" className="text-[#a8c7fa] underline">Hide</a>
    </div>
  </div>
);

const SharedTaskbar = () => (
  <div className="relative flex h-12 shrink-0 items-center bg-linear-to-r from-[#28272c] via-[#232430] to-[#1d2430] pt-0.5 text-[#f2f2f2]">
    <div className="flex w-[453px] shrink-0 items-center gap-2 pl-[22px] text-xs leading-[18px] text-[#c9c9c9]">
      <Haze className="h-6 w-6 opacity-80" />
      <div>27°C<br />Haze</div>
    </div>
    <WinLogoLight className="h-[25px] w-[25px]" />
    <label className="ml-3.5 flex h-[33px] w-[230px] items-center gap-[9px] rounded-full border border-[#55545c] bg-[#45444c] pl-3">
      <Search className="h-4 w-4" />
      <input placeholder="Search" className="w-28 bg-transparent text-sm outline-none placeholder:text-[#d0d0d0]" />
      <svg viewBox="0 0 46 24" className="ml-3.5 h-6 w-[46px]"><ellipse cx="23" cy="21" rx="22" ry="3" fill="#e9cf8b" /><path d="M3 20C6 10 12 3 20 1c0 8-6 12-13 14z" fill="#b99a7c" /><rect x="13" y="12" width="9" height="9" rx="3" fill="#7a8fe0" /><path d="M26 2h5v19h-5z" fill="#ce4932" /><path d="M32 1h5v20h-5z" fill="#e0a33c" /><path d="M38 3h5v18h-5z" fill="#4c8f7a" /></svg>
    </label>
    <div className="ml-3 flex items-center gap-[21px]">
      <TaskView dark className="h-6 w-[25px]" />
      <Explorer className="h-[23px] w-[25px]" />
      <svg viewBox="0 0 24 20" className="h-5 w-6"><defs><linearGradient id="mon" x1="0" y1="0" x2="1" y2="1"><stop offset="0" stopColor="#35c3de" /><stop offset="1" stopColor="#1673b8" /></linearGradient></defs><rect width="24" height="17" rx="1" fill="url(#mon)" /><path d="M10 17h4v2h2v1H8v-1h2z" fill="#aab6c2" /></svg>
      <FirefoxLogo className="h-6 w-6" />
      <span className="relative -ml-1.5 flex h-10 w-[42px] items-center justify-center rounded bg-[#2b2d38]">
        <ChromeLogo className="h-6 w-6" />
        <span className="absolute top-1 right-1 h-4 w-4 rounded-full border border-[#6b4b57] bg-[#463848]" />
        <span className="absolute -bottom-0.5 h-[3px] w-[17px] rounded bg-[#4cc2ff]" />
      </span>
    </div>
    <div className="ml-auto flex items-center pr-[22px] text-xs leading-[17px]">
      <ChevronUp className="h-4 w-4" strokeWidth={2.5} />
      <div className="ml-[17px] flex items-center gap-[15px]">
        <svg viewBox="0 0 18 18" className="h-[18px] w-[18px]"><path d="M1 9c4-6 8-6 13-6v10c-6 1-9-1-13-4z" fill="#76b900" /><circle cx="8" cy="8.500" r="2.500" fill="#1c2a10" /><circle cx="13" cy="13" r="4.500" fill="#ddd" /><path d="M13 10.500v5M11 12h4" stroke="#222" /></svg>
        <svg viewBox="0 0 18 18" className="h-[18px] w-[18px]"><circle cx="9" cy="9" r="8.500" fill="#5e8fe8" /><path d="M4 8c2-4 8-4 10-1M14 10c-2 4-8 4-10 1M4 9h10" fill="none" stroke="#fff" strokeWidth="1.500" /></svg>
        <svg viewBox="0 0 18 18" className="h-[18px] w-[18px]"><path d="M5 6l6-6v6z" fill="#8ab82e" /><path d="M1 8l5 2-5 4z" fill="#f2d21c" /><path d="M12 7l5 4-4 3z" fill="#c4187c" /><path d="M9 11l4 6H5z" fill="#1b3f8f" /></svg>
        <svg viewBox="0 0 18 14" className="h-3.5 w-[18px]"><path d="M3 13a3.500 3.500 0 0 1 0-7 5 5 0 0 1 9.500-1A4 4 0 0 1 14 13z" fill="#b9bcc2" /><path d="M3 13c0-4 6-5 8-4s7 0 6 3c-.3.700-1 1-3 1z" fill="#fff" /></svg>
        <svg viewBox="0 0 18 18" className="h-[18px] w-[18px]"><path d="M5 1h4v8H1V5a4 4 0 0 1 4-4z" fill="#1d9e4c" /><path d="M9 1h4a4 4 0 0 1 4 4v4H9z" fill="#2f6fe4" /><path d="M1 9h8v8H5a4 4 0 0 1-4-4z" fill="#e2362c" /><path d="M9 9h8v4a4 4 0 0 1-4 4H9z" fill="#f5b81c" /><circle cx="9" cy="9" r="3.500" fill="#1d2430" /></svg>
        <svg viewBox="0 0 18 18" className="h-[18px] w-[18px]"><path d="M8 0l7 3v6c0 5-3 7-7 9-4-2-7-4-7-9V3z" fill="#2590e0" /><path d="M12 7l6 10H6z" fill="#fcc21b" /><path d="M12 10v4M12 15v1" stroke="#222" strokeWidth="1.500" /></svg>
        <svg viewBox="0 0 18 18" className="h-[18px] w-[18px]"><rect x="3" width="12" height="18" rx="6" fill="#0a7fe8" /><path d="M6 6l6 6-3 3V3l3 3-6 6" fill="none" stroke="#fff" strokeWidth="1.200" /></svg>
        <MicLine className="h-[17px] w-[18px] text-[#8fc6d4]" />
      </div>
      <span className="mr-[19px] ml-5 text-center">ENG<br />IN</span>
      <Wifi className="h-3.5 w-[17px]" />
      <Mute className="ml-2 h-3.5 w-[17px]" />
      <Battery className="ml-2 h-3.5 w-[18px]" />
      <time className="ml-4 text-right">10:41<br />13-06-2024</time>
      <svg viewBox="0 0 16 16" className="ml-2 h-4 w-4" fill="#f2f2f2"><path d="M7 1.500A5 5 0 0 0 2 6.500V10L.5 13h13L12 10V6.500a5 5 0 0 0-5-5zM5 14h4l-2 2z" /><path d="M5 6h4L5 10h4M11 1h3l-3 3h3" fill="none" stroke="#1d2430" /></svg>
      <Copilot className="ml-[18px] h-6 w-6" />
    </div>
    <span className="absolute top-1.5 left-8 flex h-4 w-4 items-center justify-center rounded-full bg-[#e8868c] text-[10px] text-[#301518]">1</span>
    <div className="absolute top-2 left-2 flex gap-2.5">
      <div className="flex h-[30px] w-[227px] items-center justify-between rounded bg-black/60 pr-2.5 pl-[7px] text-sm font-semibold whitespace-nowrap text-white">
        Ragav Kumar V (Unverified)
        <MicOff className="h-4 w-4" cut="#18181b" color="#fff" />
      </div>
      <div className="flex h-[30px] w-[82px] items-center justify-around rounded bg-black/60 pr-px">
        <button aria-label="Zoom out" className="text-[#777]"><Minus className="h-[18px] w-[18px]" strokeWidth={1.5} /></button>
        <button aria-label="Zoom in" className="text-white"><Plus className="h-5 w-5" strokeWidth={1.5} /></button>
      </div>
    </div>
  </div>
);

/* ---------- participants ---------- */

const Participants = () => (
  <aside className="flex w-[302px] shrink-0 flex-col">
    <ul className="grid min-h-0 flex-1 grid-cols-2 grid-rows-5 pt-[25px] pr-[15px] pb-[15px] pl-[13px]">
      {people.map(([initials, name, tone]) => (
        <li key={initials} className="flex flex-col items-center">
          <span className={`flex h-22 w-22 items-center justify-center rounded-full text-[32px] font-semibold shadow ${tone}`}>{initials}</span>
          <span className="mt-2.5 flex w-[114px] items-center justify-between text-sm leading-5 whitespace-nowrap text-[#242424]">
            {name}
            <MicOff className="h-4 w-4" cut="#f5f5f5" />
          </span>
        </li>
      ))}
      <li className="flex flex-col items-center">
        <button aria-label="View all participants" className="flex h-22 w-22 items-center justify-center rounded-full border border-[#d1d1d1] bg-white text-[#242424]"><Dots className="h-7 w-7" /></button>
        <span className="mt-2.5 text-sm leading-5 text-[#242424]">View all</span>
      </li>
    </ul>
    <div className="flex h-[167px] items-center justify-center bg-[#e6e6e6]">
      <span className="flex h-[70px] w-[70px] items-center justify-center rounded-full bg-[#fdeec9] text-[26px] font-semibold text-[#835c0b]">SC</span>
    </div>
  </aside>
);

/* ---------- desktop taskbar ---------- */

const AppSlot = ({ children, running = false, width = "w-[55px]" }: { children: React.ReactNode; running?: boolean; width?: string }) => (
  <span className={`relative flex h-12 items-center justify-center ${width}`}>
    {children}
    {running && <span className="absolute bottom-0 h-1 w-2 rounded-full bg-[#858a91]" />}
  </span>
);

const Taskbar = () => (
  <footer className="flex h-[60px] shrink-0 items-center border-t border-[#b4b9c6] bg-[#e4ebf7] text-[#1b1b1b]">
    <div className="flex w-[503px] shrink-0 items-center gap-3 pl-6 text-sm leading-5">
      <span className="relative">
        <Haze className="h-7 w-7" />
        <span className="absolute -top-2 left-[15px] flex h-5 w-5 items-center justify-center rounded-full bg-[#c42b1c] text-xs text-white">1</span>
      </span>
      <div>29°C<br /><span className="text-[#5c5f66]">Haze</span></div>
    </div>
    <WinLogo className="h-[30px] w-[30px] shrink-0" />
    <label className="ml-4 flex h-10 w-[273px] shrink-0 items-center justify-between rounded-full border border-[#c9d3e2] bg-[#f8fafd] pr-0.5 pl-3">
      <Search className="h-5 w-5" strokeWidth={2.2} />
      <input placeholder="Search" className="ml-2.5 w-32 bg-transparent text-base outline-none placeholder:text-[#5c5f66]" />
      <span className="ml-auto flex h-[33px] w-[66px] items-center justify-center rounded-full bg-[#141414] font-['Liberation_Sans',sans-serif] text-[8px] text-[#e8702a]">
        <svg viewBox="0 0 8 8" className="mr-px h-2 w-2" fill="none" stroke="currentColor"><circle cx="4" cy="4" r="3.300" /><circle cx="4" cy="4" r="1.300" /></svg>
        proclink
      </span>
    </label>
    <div className="ml-1 flex">
      <AppSlot><TaskView className="h-[29px] w-[30px]" /></AppSlot>
      <AppSlot running><Explorer className="h-7 w-[30px]" /></AppSlot>
      <AppSlot><EdgeLogo className="h-[31px] w-[31px]" /></AppSlot>
      <AppSlot><StoreLogo className="h-[30px] w-[29px]" /></AppSlot>
      <AppSlot><OutlookLogo className="h-7 w-[30px]" /></AppSlot>
      <AppSlot><TeamsLogo className="h-[30px] w-[30px]" /></AppSlot>
      <AppSlot running width="w-[58px]"><CodeLogo className="h-[30px] w-[30px]" /></AppSlot>
      <AppSlot running width="w-[58px]"><ChromeLogo className="h-[31px] w-[31px]" /></AppSlot>
      <AppSlot running width="w-[65px]"><DatabaseTool className="h-[29px] w-[29px]" /></AppSlot>
      <span className="relative flex h-12 w-[47px] items-center justify-center rounded-md border border-[#d5dce8] bg-[#f3f7fc]">
        <TeamsLogo fresh className="h-[30px] w-[30px]" />
        <span className="absolute top-0.5 right-0.5 h-5 w-5 rounded-full bg-[#d13438]" />
        <span className="absolute bottom-0 h-1 w-5 rounded-full bg-[#0a74cf]" />
      </span>
    </div>
    <div className="ml-auto flex items-center pr-[25px]">
      <ChevronUp className="h-[18px] w-[18px]" strokeWidth={2} />
      <svg viewBox="0 0 20 16" className="ml-[21px] h-4 w-5"><path d="M5 14.500A4 4 0 0 1 4.500 6 5.500 5.500 0 0 1 14.500 5 4.600 4.600 0 0 1 15 14.500z" fill="#c7c7c7" stroke="#222" strokeWidth="1.200" /><path d="M1 1l17 15" stroke="#111" strokeWidth="1.400" /></svg>
      <MicLine className="ml-[22px] h-5 w-4 text-[#1456a8]" />
      <Wifi className="ml-[22px] h-4 w-5" />
      <Mute className="ml-2.5 h-4 w-5" />
      <Battery charging className="ml-2 h-[17px] w-[22px]" />
      <span className="ml-4"><Bell /></span>
      <Copilot className="ml-5 h-[30px] w-[30px]" />
    </div>
  </footer>
);

export default function App() {
  return (
    <div className="flex h-screen flex-col overflow-hidden bg-[#f5f5f5] font-['Open_Sans',sans-serif]">
      <TitleBar />
      <MeetingBar />
      <div className="flex min-h-0 flex-1 gap-1.5 px-[5px] pt-1 pb-[5px] pl-[7px]">
        <section className="flex min-w-0 flex-1 flex-col overflow-hidden">
          <TabStrip />
          <AddressBar />
          <BookmarkBar />
          <Lesson />
          <SharedTaskbar />
        </section>
        <Participants />
      </div>
      <Taskbar />
    </div>
  );
}
